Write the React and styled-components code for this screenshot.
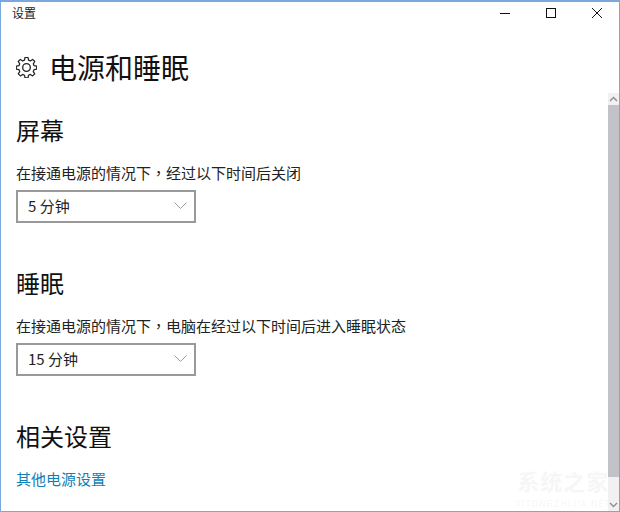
import React from 'react';
import styled, { createGlobalStyle } from 'styled-components';

const GlobalStyle = createGlobalStyle`
  html, body {
    margin: 0;
    padding: 0;
    background: #fff;
  }
  body {
    font-family: "Noto Sans CJK SC", "Noto Sans", sans-serif;
    color: #1a1a1a;
  }
`;

const Window = styled.div`
  position: relative;
  box-sizing: border-box;
  width: 620px;
  height: 512px;
  display: flex;
  flex-direction: column;
  background: #fff;
  border: 1px solid #7aa7dc;
  border-top-width: 2px;
  overflow: hidden;
`;

const TitleBar = styled.div`
  height: 30px;
  flex: none;
  display: flex;
  align-items: flex-start;
  justify-content: space-between;
`;

const WindowTitle = styled.div`
  font-size: 12px;
  line-height: 20px;
  padding: 1px 0 0 11px;
  color: #222;
`;

const WindowButtons = styled.div`
  display: flex;
  margin-right: -1px;
`;

const WindowButton = styled.div`
  width: 46px;
  height: 24px;
  margin-top: -1px;
  display: flex;
  align-items: center;
  justify-content: center;
`;

const Body = styled.div`
  flex: 1;
  min-height: 0;
  display: flex;
`;

const Content = styled.main`
  flex: 1;
  padding: 0 0 0 15px;
`;

const PageHeader = styled.header`
  display: flex;
  align-items: center;
  gap: 12px;
  height: 40px;
  margin-top: 15px;
`;

const PageTitle = styled.h1`
  margin: 0;
  font-size: 28px;
  line-height: 40px;
  font-weight: 400;
  color: #111;
`;

const Section = styled.section`
  margin-top: ${(p) => p.$top}px;
`;

const SectionTitle = styled.h2`
  margin: 0;
  font-size: 24px;
  line-height: 34px;
  font-weight: 400;
  color: #111;
`;

const Label = styled.div`
  margin-top: 15px;
  font-size: 15px;
  line-height: 22px;
  color: #222;
`;

const Comma = styled.span`
  font-family: "Noto Sans CJK TC", sans-serif;
`;

const Select = styled.div`
  box-sizing: border-box;
  width: 180px;
  height: 33px;
  margin-top: 6px;
  padding: 0 7px 2px 10px;
  display: flex;
  align-items: center;
  justify-content: space-between;
  border: 2px solid #999;
  font-size: 15px;
  color: #222;
`;

const Link = styled.a`
  display: block;
  margin-top: 15px;
  font-size: 15px;
  line-height: 22px;
  color: #0f7fb8;
`;

const Scrollbar = styled.div`
  width: 11px;
  flex: none;
  margin-top: 61px;
  display: flex;
  flex-direction: column;
  background: #f1f1f1;
`;

const ScrollArrow = styled.div`
  height: 12px;
  flex: none;
  display: flex;
  align-items: center;
  justify-content: center;
`;

const ScrollThumb = styled.div`
  height: 372px;
  flex: none;
  background: #c2c3c9;
`;

const ScrollTrack = styled.div`
  flex: 1;
`;

const Watermark = styled.div`
  position: absolute;
  right: 8px;
  bottom: 1px;
  text-align: center;
  color: rgba(225, 225, 225, 0.3);
`;

const WatermarkName = styled.div`
  font-size: 22px;
  line-height: 34px;
  font-weight: 700;
  letter-spacing: 1px;
`;

const WatermarkSub = styled.div`
  font-size: 9px;
  line-height: 13px;
  letter-spacing: 1px;
`;

function GearIcon() {
  return (
    <svg width="21" height="21" viewBox="1 1 22 22" fill="none" stroke="#222" strokeWidth="1.4" strokeLinejoin="round">
      <path d="M10.3 1.6h3.4l.6 3 2.1.9 2.6-1.7 2.4 2.4-1.7 2.6.9 2.1 3 .6v3.4l-3 .6-.9 2.1 1.7 2.6-2.4 2.4-2.6-1.7-2.1.9-.6 3h-3.4l-.6-3-2.1-.9-2.6 1.7-2.4-2.4 1.7-2.6-.9-2.1-3-.6v-3.4l3-.6.9-2.1-1.7-2.6 2.4-2.4 2.6 1.7 2.1-.9z" transform="translate(12 12) scale(.92) translate(-12 -13)" />
      <circle cx="12" cy="12" r="4" />
    </svg>
  );
}

function Chevron() {
  return (
    <svg width="13" height="7" viewBox="0 0 13 7" fill="none" stroke="#9a9a9a" strokeWidth="1">
      <path d="M.5.5l6 6 6-6" />
    </svg>
  );
}

function ScrollChevron({ up }) {
  return (
    <svg width="9" height="6" viewBox="0 0 9 6" fill="none" stroke="#8c8c8c" strokeWidth="1.3">
      <path d={up ? 'M1 5l3.5-3.5L8 5' : 'M1 1l3.5 3.5L8 1'} />
    </svg>
  );
}

export default function App() {
  return (
    <>
      <GlobalStyle />
      <Window>
        <TitleBar>
          <WindowTitle>设置</WindowTitle>
          <WindowButtons>
            <WindowButton>
              <svg width="10" height="10" viewBox="0 0 10 10" stroke="#111" strokeWidth="1"><path d="M0 5.5h10" /></svg>
            </WindowButton>
            <WindowButton>
              <svg width="10" height="10" viewBox="0 0 10 10" fill="none" stroke="#111" strokeWidth="1"><rect x=".5" y=".5" width="9" height="9" /></svg>
            </WindowButton>
            <WindowButton>
              <svg width="10" height="10" viewBox="0 0 10 10" fill="none" stroke="#111" strokeWidth="1"><path d="M0 0l10 10M10 0L0 10" /></svg>
            </WindowButton>
          </WindowButtons>
        </TitleBar>
        <Body>
          <Content>
            <PageHeader>
              <GearIcon />
              <PageTitle>电源和睡眠</PageTitle>
            </PageHeader>
            <Section $top={26}>
              <SectionTitle>屏幕</SectionTitle>
              <Label>在接通电源的情况下<Comma>，</Comma>经过以下时间后关闭</Label>
              <Select>5 分钟<Chevron /></Select>
            </Section>
            <Section $top={43}>
              <SectionTitle>睡眠</SectionTitle>
              <Label>在接通电源的情况下<Comma>，</Comma>电脑在经过以下时间后进入睡眠状态</Label>
              <Select>15 分钟<Chevron /></Select>
            </Section>
            <Section $top={43}>
              <SectionTitle>相关设置</SectionTitle>
              <Link>其他电源设置</Link>
            </Section>
          </Content>
          <Scrollbar>
            <ScrollArrow><ScrollChevron up /></ScrollArrow>
            <ScrollThumb />
            <ScrollTrack />
            <ScrollArrow><ScrollChevron /></ScrollArrow>
          </Scrollbar>
        </Body>
        <Watermark>
          <WatermarkName>系统之家</WatermarkName>
          <WatermarkSub>XITONGZHIJIA.NET</WatermarkSub>
        </Watermark>
      </Window>
    </>
  );
}
